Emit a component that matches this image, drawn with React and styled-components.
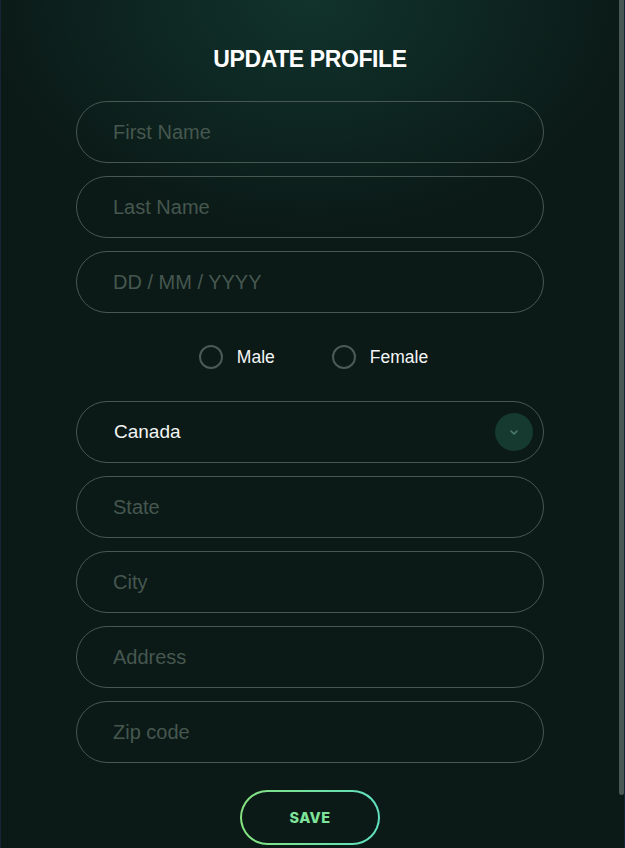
import React, { useState } from "react";
import styled, { createGlobalStyle } from "styled-components";

const GlobalStyle = createGlobalStyle`
html, body {
    margin:0;
    padding:0;
    height:100%;
    background:#0b1a17;
    font-family:"Liberation Sans", Arial, sans-serif;
}
#root {
    height:100%;
}
`

const Frame = styled.div`
height:100vh;
box-sizing:border-box;
display:flex;
border-left:1px solid #16243a;
border-right:1px solid #16243a;
background:#0b1a17;
overflow:hidden;
`

const Page = styled.div`
flex:1;
min-width:0;
background:
    radial-gradient(ellipse 320px 230px at 50% 0%, #11332b 0%, #0e2823 45%, rgba(11,26,23,0) 100%),
    #0b1a17;
`

const ScrollTrack = styled.div`
width:5px;
flex-shrink:0;
background:#0b1a17;
`

const ScrollThumb = styled.div`
height:795px;
background:#485853;
border-radius:0 0 3px 3px;
`

const Form = styled.form`
display:flex;
flex-direction:column;
align-items:center;
gap:13px;
padding:46px 0 59px;
`

const Title = styled.h1`
margin:0 0 16px;
font-size:23px;
font-weight:bold;
color:#ffffff;
line-height:26px;
letter-spacing:-0.4px;
`

const Field = styled.div`
position:relative;
width:468px;
height:62px;
box-sizing:border-box;
border:1px solid #48574f;
border-radius:31px;
display:flex;
align-items:center;
`

const Input = styled.input`
width:100%;
height:100%;
box-sizing:border-box;
padding:0 36px;
border:none;
outline:none;
background:transparent;
color:#ffffff;
font-family:"Liberation Sans", Arial, sans-serif;
font-size:20px;
&::placeholder {
    color:#46574f;
}
`

const SelectText = styled.div`
flex:1;
padding-left:37px;
color:#f2f5f4;
font-size:19px;
`

const Chevron = styled.div`
width:38px;
height:38px;
margin-right:10px;
border-radius:50%;
background:#163a30;
display:flex;
align-items:center;
justify-content:center;
`

const RadioRow = styled.div`
height:62px;
display:flex;
align-items:center;
gap:57px;
margin-left:7px;
`

const RadioLabel = styled.label`
display:flex;
align-items:center;
gap:14px;
color:#f4f6f5;
font-size:17.5px;
cursor:pointer;
`

const RadioCircle = styled.span`
width:24px;
height:24px;
box-sizing:border-box;
border-radius:50%;
border:2px solid ${props => props.checked ? "#7ce39c" : "#4a5a54"};
display:flex;
align-items:center;
justify-content:center;
&::after {
    content:"";
    width:10px;
    height:10px;
    border-radius:50%;
    background:${props => props.checked ? "#7ce39c" : "transparent"};
}
`

const SaveButton = styled.button`
margin-top:14px;
width:140px;
height:55px;
border:2px solid transparent;
border-radius:28px;
background:
    linear-gradient(#0b1a17, #0b1a17) padding-box,
    linear-gradient(90deg, #86e27e, #5fe0c0) border-box;
color:#7de39a;
font-family:Inter, "Open Sans", sans-serif;
font-weight:800;
font-size:14.5px;
letter-spacing:0.4px;
cursor:pointer;
`

const fields = ["State", "City", "Address", "Zip code"];

export default function App() {
    const [gender, setGender] = useState("");
    return (
        <>
            <GlobalStyle />
            <Frame>
                <Page>
                    <Form onSubmit={e => e.preventDefault()}>
                        <Title>UPDATE PROFILE</Title>
                        <Field><Input placeholder="First Name" /></Field>
                        <Field><Input placeholder="Last Name" /></Field>
                        <Field><Input placeholder="DD / MM / YYYY" /></Field>
                        <RadioRow>
                            <RadioLabel onClick={() => setGender("male")}>
                                <RadioCircle checked={gender === "male"} />
                                Male
                            </RadioLabel>
                            <RadioLabel onClick={() => setGender("female")}>
                                <RadioCircle checked={gender === "female"} />
                                Female
                            </RadioLabel>
                        </RadioRow>
                        <Field>
                            <SelectText>Canada</SelectText>
                            <Chevron>
                                <svg width="10" height="7" viewBox="0 0 10 7">
                                    <path d="M2 2l3 3 3-3" fill="none" stroke="#4f7d6c" strokeWidth="1.6" strokeLinecap="round" strokeLinejoin="round" />
                                </svg>
                            </Chevron>
                        </Field>
                        {fields.map(f => (
                            <Field key={f}><Input placeholder={f} /></Field>
                        ))}
                        <SaveButton type="submit">SAVE</SaveButton>
                    </Form>
                </Page>
                <ScrollTrack>
                    <ScrollThumb />
                </ScrollTrack>
            </Frame>
        </>
    )
}
